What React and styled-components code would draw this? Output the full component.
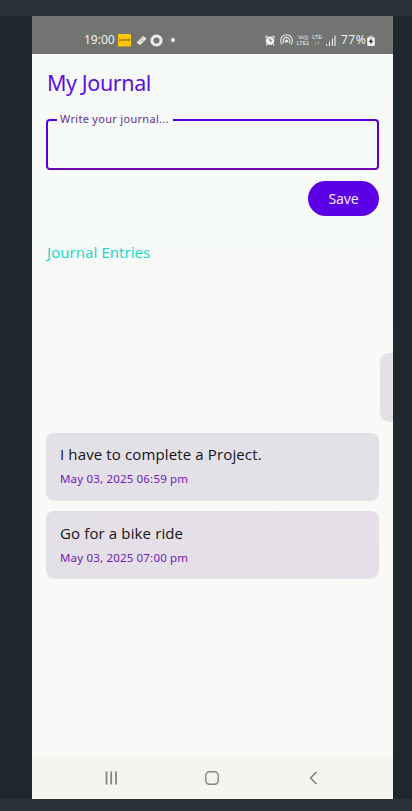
import React from "react";
import styled, { createGlobalStyle } from "styled-components";

const GlobalStyle = createGlobalStyle`
  * { box-sizing: border-box; }
  body { margin: 0; background: #273238; font-family: "Noto Sans", "Open Sans", sans-serif; }
`;

const Stage = styled.div`
  height: 811px;
  padding: 16px 0 12px;
  background: #273239;
`;

const Backdrop = styled.div`
  height: 783px;
  padding: 0 19px 0 32px;
  background: #1f282e;
`;

const Phone = styled.div`
  position: relative;
  display: flex;
  flex-direction: column;
  height: 783px;
  overflow: hidden;
  background: linear-gradient(#f5f9f8, #f7faf7 45%, #f9faf8);
`;

const StatusBar = styled.header`
  display: flex;
  justify-content: space-between;
  align-items: center;
  flex: none;
  height: 38px;
  padding: 10px 18px 0 52px;
  background: #727471;
  color: #f0f1ee;
`;

const StatusGroup = styled.div`
  display: flex;
  align-items: center;
  height: 16px;
`;

const StatusText = styled.span`
  width: ${(p) => p.$width}px;
  margin-left: ${(p) => p.$gap || 0}px;
  font-size: 12px;
  line-height: 16px;
  letter-spacing: ${(p) => p.$spacing || 0}px;
  white-space: nowrap;
`;

const AppTile = styled.span`
  width: 13px;
  height: 13px;
  margin: 0 5px 0 0;
  border-bottom: 1px solid #bc9320;
  border-radius: 1px;
  background: #ffc803;
  color: #6b5604;
  font-size: 3px;
  font-weight: 700;
  line-height: 13px;
  text-align: center;
`;

const Glyph = styled.svg`
  display: block;
  flex: none;
  margin-left: ${(p) => p.$gap || 0}px;
`;

const Network = styled.div`
  display: grid;
  grid-template-rows: 6px 6px;
  justify-items: center;
  width: ${(p) => p.$width}px;
  margin-left: ${(p) => p.$gap}px;
  font: 400 5.5px/6px "Liberation Sans", sans-serif;
  white-space: nowrap;
`;

const Content = styled.main`
  display: flex;
  flex-direction: column;
  flex: 1;
  padding: 14px 14px 0;
`;

const Title = styled.h1`
  margin: 0;
  height: 30px;
  padding-left: 1px;
  color: #5c10dc;
  font-size: 21.5px;
  font-weight: 400;
  line-height: 29px;
  letter-spacing: -0.4px;
`;

const Field = styled.fieldset`
  height: 58px;
  margin: 14px 0 0;
  padding: 0 0 0 9px;
  min-width: 0;
  border: 2px solid #5600e0;
  border-bottom-color: #6b00b2;
  border-radius: 4px;
`;

const FieldLabel = styled.legend`
  width: 116px;
  height: 16px;
  padding: 0 0 0 3px;
  color: #65308f;
  font-size: 11px;
  line-height: 14px;
  letter-spacing: 0.3px;
  white-space: nowrap;
`;

const SaveButton = styled.button`
  align-self: flex-end;
  width: 71px;
  height: 35px;
  margin-top: 11px;
  padding: 0;
  border: 0;
  border-radius: 18px;
  background: #5c00e6;
  color: #f3e9fc;
  font: 400 14px/35px "Noto Sans", sans-serif;
  letter-spacing: -0.1px;
`;

const SectionTitle = styled.h2`
  height: 22px;
  margin: 25px 0 0;
  padding-left: 1px;
  color: #1fd9c6;
  font-size: 15px;
  font-weight: 400;
  line-height: 22px;
  letter-spacing: 0.03px;
`;

const EntryList = styled.div`
  display: grid;
  grid-template-rows: 67px 67px;
  gap: 11px;
  margin-top: 170px;
`;

const Entry = styled.article`
  padding: 11px 13px 0 14px;
  border-radius: 8px;
  background: ${(p) => p.$fill};
  box-shadow: 0 1px 0 rgba(80, 80, 90, 0.1);

  & + & { padding-top: 12px; }
`;

const EntryText = styled.p`
  margin: 0;
  color: #151419;
  font-family: "Open Sans", "Noto Sans", sans-serif;
  font-size: 15px;
  line-height: 21px;
  letter-spacing: 0.13px;
`;

const EntryDate = styled.time`
  display: block;
  margin-top: 6px;
  color: #701bb8;
  font-size: 11.5px;
  line-height: 16px;
  letter-spacing: 0.18px;
`;

const EdgeHandle = styled.div`
  position: absolute;
  top: 337px;
  right: 0;
  width: 13px;
  height: 69px;
  border-radius: 9px 0 0 9px;
  background: #e2e0e6;
`;

const NavBar = styled.nav`
  display: flex;
  justify-content: space-between;
  align-items: center;
  flex: none;
  height: 42px;
  padding: 0 73px 1px 72px;
  background: #f3f5ee;
`;

const entries = [
  { text: "I have to complete a Project.", date: "May 03, 2025 06:59 pm", fill: "#e3e0e8" },
  { text: "Go for a bike ride", date: "May 03, 2025 07:00 pm", fill: "linear-gradient(100deg, #e4e0e7, #e6dfe9)" },
];

export default function App() {
  return (
    <Stage>
      <GlobalStyle />
      <Backdrop>
        <Phone>
          <StatusBar>
            <StatusGroup>
              <StatusText $width={34}>19:00</StatusText>
              <AppTile>Journal</AppTile>
              <Glyph width="11" height="12" viewBox="0 0 11 12">
                <path d="M1.2 8.6 7 2.5 10 4.6 4.2 10.6Z" fill="#e9ebe6" stroke="#e9ebe6" strokeLinejoin="round" />
                <path d="m4.5 5.2 2.5 2.3M3.5 8.2l1-1M6.8 4.8l1-1" stroke="#727471" strokeWidth="0.7" />
              </Glyph>
              <Glyph $gap={3} width="13" height="13" viewBox="0 0 13 13">
                <circle cx="6.5" cy="6.5" r="4.6" fill="#777876" stroke="#eceeea" strokeWidth="3" />
              </Glyph>
              <Glyph $gap={8} width="4" height="4" viewBox="0 0 4 4">
                <circle cx="2" cy="2" r="2" fill="#f5f5f2" />
              </Glyph>
            </StatusGroup>
            <StatusGroup>
              <Glyph width="10" height="11" viewBox="0 0 10 11">
                <circle cx="5" cy="5.7" r="4.3" fill="#f1f2ee" />
                <path d="m.3 2.5 2-1.7M9.7 2.5l-2-1.7M2 9.2.9 10.4M8 9.2l1.1 1.2" stroke="#f1f2ee" strokeWidth="1.2" />
                <path d="M5 3.2v2.7h2" fill="none" stroke="#666864" />
              </Glyph>
              <Glyph $gap={5} width="13" height="12" viewBox="0 0 13 12" fill="none" stroke="#eceee9" strokeWidth="1.1">
                <path d="M2.3 10.5a5.8 5.8 0 1 1 8.4 0M4.2 9a3.3 3.3 0 1 1 4.6 0" />
                <circle cx="6.5" cy="7" r="1" fill="#eceee9" />
              </Glyph>
              <Network $width={14} $gap={3}><span>Vo))</span><span>LTE1</span></Network>
              <Network $width={10} $gap={2}><span>LTE</span><span>↓↑</span></Network>
              <Glyph $gap={4} width="10" height="11" viewBox="0 0 10 11" stroke="#e9ebe6">
                <path d="M.5 9v2M3.5 6.5V11M6.5 3.5V11M9 .5V11" strokeWidth="1.2" />
              </Glyph>
              <StatusText $gap={5} $width={26} $spacing={0.5}>77%</StatusText>
              <Glyph width="8" height="11" viewBox="0 0 8 11">
                <rect x=".2" y="2" width="7.6" height="9" rx="1.5" fill="#f0f1ee" />
                <rect x="2" y=".5" width="4" height="2" fill="#b5b7b2" />
                <path d="m4.7 3-3 4h2l-.5 2.6 3-3.9h-2Z" fill="#222" />
              </Glyph>
            </StatusGroup>
          </StatusBar>
          <Content>
            <Title>My Journal</Title>
            <Field><FieldLabel>Write your journal...</FieldLabel></Field>
            <SaveButton>Save</SaveButton>
            <SectionTitle>Journal Entries</SectionTitle>
            <EntryList>
              {entries.map((e) => (
                <Entry key={e.date} $fill={e.fill}>
                  <EntryText>{e.text}</EntryText>
                  <EntryDate>{e.date}</EntryDate>
                </Entry>
              ))}
            </EntryList>
          </Content>
          <EdgeHandle />
          <NavBar>
            <Glyph width="14" height="14" viewBox="0 0 14 14">
              <path d="M2.5 .5v13M7.2 .5v13M12 .5v13" stroke="#848681" strokeWidth="1.8" />
            </Glyph>
            <Glyph width="14" height="14" viewBox="0 0 14 14">
              <rect x=".8" y=".8" width="12.4" height="12.4" rx="3.6" fill="none" stroke="#868884" strokeWidth="1.4" />
            </Glyph>
            <Glyph width="14" height="14" viewBox="0 0 14 14">
              <path d="m10.5 1-6 6 6 6" fill="none" stroke="#7c7e7a" strokeWidth="1.5" />
            </Glyph>
          </NavBar>
        </Phone>
      </Backdrop>
    </Stage>
  );
}
